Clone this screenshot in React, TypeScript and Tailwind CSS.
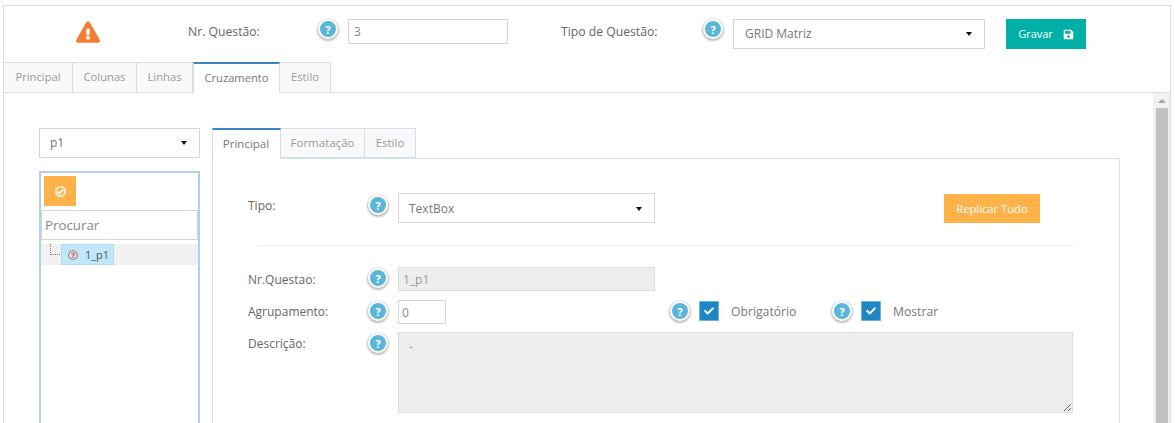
import type { ReactNode } from "react"
import { FaExclamationTriangle, FaRegCheckCircle, FaRegQuestionCircle, FaSave, FaCheck } from "react-icons/fa"

// Bolinha de ajuda ao lado dos campos
function Help({ className = "" }: { className?: string }) {
  return (
    <span className={`flex size-[20px] shrink-0 items-center justify-center rounded-full border-2 border-white bg-[#5ab7da] text-[11px] leading-none font-bold text-white shadow-[0_1px_2px_1px_rgba(0,0,0,0.25)] ${className}`}>
      ?
    </span>
  )
}

function Caret() {
  return <span className="h-0 w-0 border-x-[3.5px] border-t-[4px] border-x-transparent border-t-[#111]" />
}

function Select({ value, className = "" }: { value: string; className?: string }) {
  return (
    <div className={`flex items-center justify-between border border-[#d6d6d6] bg-white pr-[12px] pl-[10px] text-[#777] ${className}`}>
      <span>{value}</span>
      <Caret />
    </div>
  )
}

function Tab({ label, active, className = "" }: { label: string; active?: boolean; className?: string }) {
  return active ? (
    <div className={`-mb-px flex items-center justify-center border-x border-t-2 border-x-[#d5dfe9] border-t-[#3a87c8] bg-white text-[#777] ${className}`}>
      {label}
    </div>
  ) : (
    <div className={`flex items-center justify-center border-t border-r border-[#d5dfe9] bg-[#f9f9f9] text-[#999] ${className}`}>
      {label}
    </div>
  )
}

function Row({ label, className = "", children }: { label: string; className?: string; children: ReactNode }) {
  return (
    <div className={`flex items-start ${className}`}>
      <span className="w-[120px] shrink-0 text-[#666]">{label}</span>
      {children}
    </div>
  )
}

function Check() {
  return (
    <span className="flex size-[20px] items-center justify-center border border-[#6fb3e0] bg-[#1e86c5] text-white">
      <FaCheck size={10} />
    </span>
  )
}

export default function App() {
  return (
    <div className="h-[423px] w-[1175px] overflow-hidden bg-white pt-[5px] pr-[4px] pl-[3px] font-['Open_Sans',sans-serif] text-[12px] text-[#777]">
      <div className="h-[430px] border-t border-r border-l border-[#d5dfe9]">
        {/* cabeçalho */}
        <div className="flex h-[56px] items-start pt-[13px] text-[#555]">
          <FaExclamationTriangle size={24} className="mt-[1px] ml-[72px] text-[#f47d30]" />
          <span className="mt-[3px] ml-[88px] w-[130px] text-[12.2px] leading-[20px] text-[#666]">Nr. Questão:</span>
          <Help />
          <div className="ml-[10px] flex h-[25px] w-[160px] items-center border border-[#d6d6d6] pl-[5px] text-[#888]">3</div>
          <span className="mt-[3px] ml-[53px] w-[142px] text-[12.2px] leading-[20px] text-[#666]">Tipo de Questão:</span>
          <Help />
          <Select value="GRID Matriz" className="ml-[10px] h-[30px] w-[252px] pl-[11px]" />
          <button className="ml-[21px] flex h-[30px] w-[80px] items-center justify-center gap-[10px] bg-[#00b0a6] text-[11px] text-white">
            Gravar <FaSave size={11} />
          </button>
        </div>

        {/* abas principais */}
        <div className="relative flex h-[31px] border-b border-[#d5dfe9] text-[11.2px]">
          <Tab label="Principal" className="w-[69px]" />
          <Tab label="Colunas" className="w-[64px]" />
          <Tab label="Linhas" className="w-[56px]" />
          <Tab label="Cruzamento" active className="w-[87px]" />
          <Tab label="Estilo" className="w-[51px] border-l-0" />
        </div>

        <div className="flex h-[340px]">
          <div className="flex flex-1 gap-[12px] pt-[35px] pl-[35px]">
            {/* coluna da árvore */}
            <div className="w-[161px] shrink-0">
              <Select value="p1" className="h-[30px] text-[12px]" />
              <div className="mt-[13px] h-[270px] border-2 border-[#b4cdf0] pt-[3px]">
                <div className="ml-[3px] flex h-[30px] w-[32px] items-center justify-center bg-[#ffb248] text-white">
                  <FaRegCheckCircle size={11} stroke="currentColor" strokeWidth={24} />
                </div>
                <div className="mt-[4px] flex h-[30px] items-center border border-[#d6d6d6] pt-[1px] pl-[3px] text-[13.3px] text-[#888]">Procurar</div>
                <div className="relative mt-[4px] flex h-[21px] bg-[#f1f1f1] pl-[20px]">
                  <span className="absolute top-0 left-[9px] h-[11px] w-[10px] border-b border-l border-dotted border-[#777]" />
                  <div className="flex w-[53px] items-center gap-[7px] border border-[#aedcf2] bg-[#bfe8fb] pt-[1px] pl-[6px] text-[11px] text-[#555]">
                    <FaRegQuestionCircle size={10} className="text-[#d9605a]" />
                    1_p1
                  </div>
                </div>
              </div>
            </div>

            {/* painel da direita */}
            <div className="w-[908px] shrink-0">
              <div className="relative flex h-[30px] text-[11.5px]">
                <div className="z-10 flex h-[31px] w-[69px] items-center justify-center border-x border-t-2 border-x-[#d5dfe9] border-t-[#3a87c8] bg-white pr-[1px] pb-[1px] text-[#777]">Principal</div>
                <div className="flex w-[84px] items-center justify-center border-t border-r border-b border-[#d5dfe9] bg-[#f9f9f9] text-[#999]">Formatação</div>
                <div className="flex w-[51px] items-center justify-center border-t border-r border-b border-[#d5dfe9] bg-[#f9f9f9] text-[#999]">Estilo</div>
              </div>
              <div className="h-[280px] border border-[#d5dfe9] pt-[34px] pl-[35px] text-[12px]">
                <Row label="Tipo:" className="h-[30px] leading-[26px]">
                  <Help className="mt-[2px]" />
                  <Select value="TextBox" className="ml-[10px] h-[30px] w-[257px] pt-[1px] leading-[18px]" />
                  <button className="mt-[1px] ml-[289px] h-[29px] w-[96px] bg-[#ffb248] text-[11.2px] text-white">Replicar Tudo</button>
                </Row>
                <div className="mt-[22px] ml-[10px] h-px w-[816px] bg-[#eee]" />
                <Row label="Nr.Questao:" className="mt-[21px] h-[24px] leading-[25px]">
                  <Help className="mt-[1px]" />
                  <div className="ml-[10px] h-[24px] w-[257px] border border-[#ddd] bg-[#eee] pl-[4px] leading-[23px] text-[#999]">1_p1</div>
                </Row>
                <Row label="Agrupamento:" className="mt-[9px] h-[24px] leading-[24px]">
                  <Help className="mt-[1px]" />
                  <div className="ml-[10px] h-[24px] w-[48px] border border-[#d6d6d6] pl-[3px] text-[#888]">0</div>
                  <Help className="mt-[1px] ml-[224px]" />
                  <span className="mt-[1px] ml-[9px]"><Check /></span>
                  <span className="ml-[12px] w-[101px] text-[12.2px] text-[#777]">Obrigatório</span>
                  <Help className="mt-[1px]" />
                  <span className="mt-[1px] ml-[9px]"><Check /></span>
                  <span className="ml-[12px] text-[12.2px] text-[#777]">Mostrar</span>
                </Row>
                <Row label="Descrição:" className="mt-[8px] leading-[24px]">
                  <Help className="mt-[1px]" />
                  <textarea
                    readOnly
                    value="-"
                    className="ml-[10px] h-[81px] w-[675px] border border-[#ddd] bg-[#eee] px-[10px] py-[2px] text-[#999] outline-none"
                  />
                </Row>
              </div>
            </div>
          </div>

          {/* barra de rolagem */}
          <div className="flex w-[17px] shrink-0 flex-col items-center bg-[#f1f1f1]">
            <span className="mt-[6px] h-0 w-0 border-x-[4px] border-b-[4px] border-x-transparent border-b-[#a3a3a3]" />
            <div className="mt-[5px] w-[12px] flex-1 bg-[#c1c1c1]" />
          </div>
        </div>
      </div>
    </div>
  )
}
